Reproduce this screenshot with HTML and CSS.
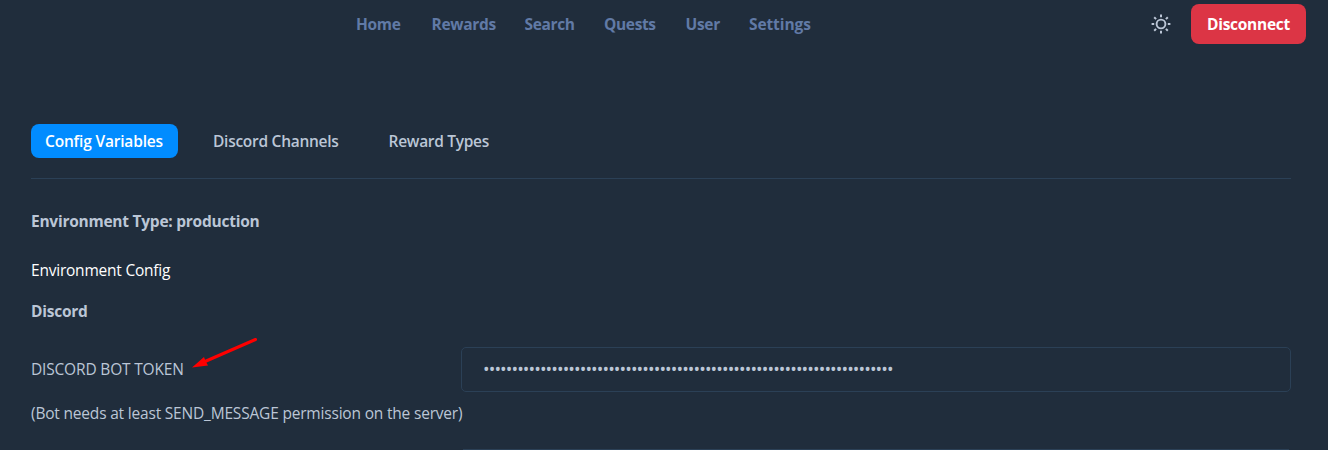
FILE: index.html
```html
<!DOCTYPE html>
<html lang="en">
<head>
<meta charset="utf-8">
<title>Settings</title>
<link rel="stylesheet" href="styles.css">
</head>
<body>
<header class="topbar">
  <nav class="nav">
    <a class="n-home">Home</a><a class="n-rewards">Rewards</a><a class="n-search">Search</a><a class="n-quests">Quests</a><a class="n-user">User</a><a class="n-settings">Settings</a>
  </nav>
  <div class="actions">
    <svg class="sun" viewBox="0 0 20 20" fill="none" stroke="#bbc6d6" stroke-width="2"><circle cx="10" cy="10" r="4.4" stroke-width="1.9"/><path d="M10 .6v2.6M10 16.8v2.6M.6 10h2.6M16.8 10h2.6M3.2 3.2l1.9 1.9M14.9 14.9l1.9 1.9M3.2 16.8l1.9-1.9M14.9 5.1l1.9-1.9"/></svg>
    <button class="disconnect">Disconnect</button>
  </div>
</header>
<main class="content">
  <div class="tabs">
    <a class="tab active">Config Variables</a>
    <a class="tab">Discord Channels</a>
    <a class="tab types">Reward Types</a>
  </div>
  <h3 class="heading environment">Environment Type: production</h3>
  <p class="caption">Environment Config</p>
  <h3 class="heading discord">Discord</h3>
  <div class="row">
    <label class="label"><span>DISCORD BOT TOKEN</span>
      <svg class="arrow" viewBox="0 0 66 32"><path d="M64.5 1.5L14 23.5" stroke="#fe0000" stroke-width="3" stroke-linecap="round"/><path d="M1 29.5L13 19L14.5 23L17 27.5Z" fill="#fe0000"/></svg>
    </label>
    <div class="field"><span class="dots">••••••••••••••••••••••••••••••••••••••••••••••••••••••••••••••••••••••••</span></div>
  </div>
  <p class="hint">(Bot needs at least SEND_MESSAGE permission on the server)</p>
  <div class="next"></div>
</main>
</body>
</html>
```
FILE: styles.css
```css
* { box-sizing: border-box; }
html, body { margin: 0; height: 450px; overflow: hidden; }
body { background: #202d3c; color: #bbc6d6; font: 15.5px/24px "Open Sans", "Noto Sans", sans-serif; }
h3, p { margin: 0; }
span, a, p { white-space: nowrap; }
.topbar { height: 48px; padding: 4px 22px 4px 356px; display: flex; align-items: center; justify-content: space-between; }
.nav { display: flex; color: #617aa6; font-weight: 700; letter-spacing: -.3px; }
.n-home { width: 75.5px; }
.n-rewards { width: 93px; }
.n-search { width: 79.5px; letter-spacing: -.35px; }
.n-quests { width: 81.5px; letter-spacing: -.35px; }
.n-user { width: 63.5px; }
.n-settings { letter-spacing: -.1px; }
.actions { display: flex; align-items: center; gap: 20px; }
.sun { width: 20px; height: 20px; }
.disconnect { width: 115px; height: 40px; border: 0; border-radius: 8px; background: #dc3545; color: #fff; font: 700 15.5px/24px "Open Sans", sans-serif; padding: 0; letter-spacing: -.28px; }
.content { padding: 76px 37px 0 31px; }
.tabs { height: 55px; border-bottom: 1px solid #2b4056; display: flex; align-items: flex-start; gap: 21px; }
.tab { height: 34px; padding: 5px 14px; border-radius: 8px; font-weight: 600; letter-spacing: -.27px; }
.active { width: 147px; background: #018cff; color: #fff; letter-spacing: -.18px; }
.types { padding-left: 15px; letter-spacing: -.3px; }
.heading { font-size: 15.5px; line-height: 24px; font-weight: 700; letter-spacing: -.25px; }
.environment { margin-top: 30px; }
.caption { margin-top: 25px; color: #fff; letter-spacing: -.22px; }
.discord { margin-top: 17px; }
.row { display: flex; margin-top: 24px; height: 45px; }
.label { width: 430px; flex: none; display: flex; align-items: center; padding-bottom: 2px; letter-spacing: -.18px; }
.arrow { width: 66px; height: 32px; margin: -29px 0 0 7px; }
.field { flex: 1; height: 45px; border: 1px solid #2b4056; border-radius: 5px; padding: 9px 21px; }
.dots { font-size: 17.5px; letter-spacing: -.89px; }
.hint { margin-top: 9px; letter-spacing: -.19px; }
.next { margin: 24px 2px 0 432px; border-top: 1px solid #2b4056; }
```
